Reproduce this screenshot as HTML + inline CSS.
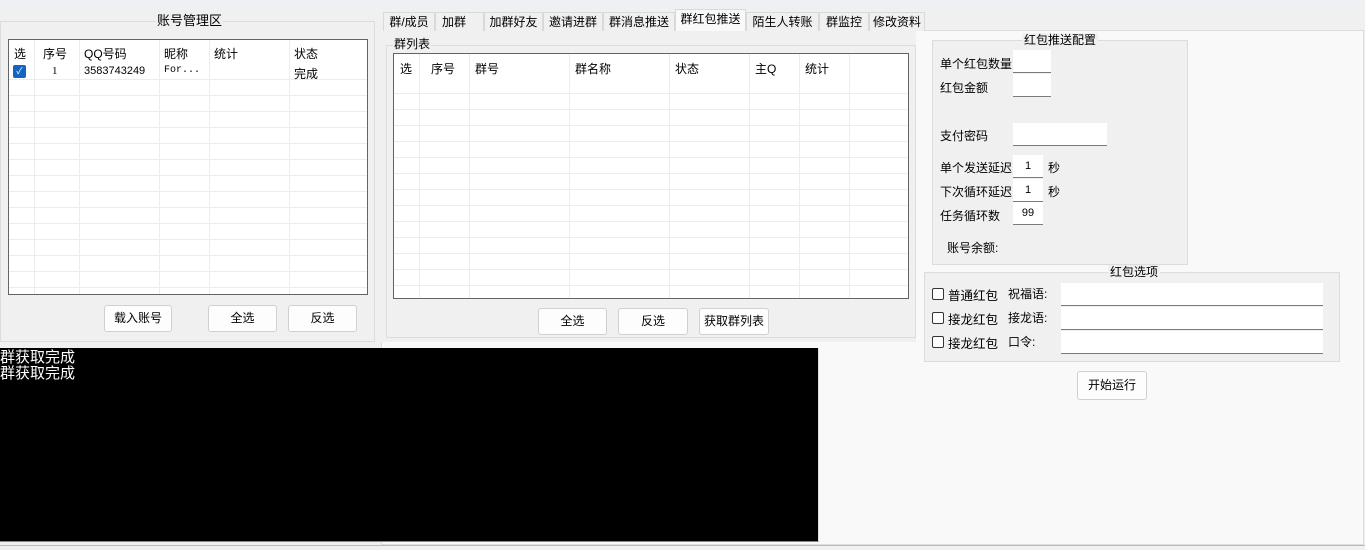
<!DOCTYPE html>
<html><head><meta charset="utf-8"><style>
*{margin:0;padding:0;box-sizing:border-box}
body{width:1365px;height:550px;background:#f0f0f0;position:relative;overflow:hidden;font-family:"Liberation Sans","Noto Sans CJK SC",sans-serif;font-size:12px;color:#000}
.a{position:absolute}
.grp{position:absolute;border:1px solid #dcdcdc}
.gt{position:absolute;background:#f0f0f0;padding:0 1px;font-size:12px;line-height:14px;white-space:nowrap}
.tbl{position:absolute;background:#fff;border:1px solid #646464;overflow:hidden}
.btn{position:absolute;background:#fdfdfd;border:1px solid #d0d0d0;border-radius:3px;text-align:center;font-size:12px}
.inp{position:absolute;background:#fff;border-bottom:1px solid #7a7a7a;font-size:11px;text-align:center;line-height:22px}
.tab{position:absolute;top:12px;height:19px;border:1px solid #d9d9d9;border-bottom:none;background:#f0f0f0;text-align:center;line-height:18px;font-size:12px}
.cb{position:absolute;width:12px;height:12px;border:1px solid #333;border-radius:2px;background:#fff}
</style></head><body>
<div class="a" style="left:0;top:0;width:1365px;height:10px;background:#eef0f3"></div>
<!-- tab page -->
<div class="a" style="left:381px;top:30px;width:983px;height:515px;background:#f9f9f9;border:1px solid #dcdcdc"></div>
<div class="a" style="left:381px;top:30px;width:535px;height:312px;background:#f0f0f0"></div>
<!-- left group -->
<div class="grp" style="left:0;top:21px;width:375px;height:321px"></div>
<div class="gt" style="left:156px;top:14px;font-size:13px">账号管理区</div>
<div class="tbl" style="left:8px;top:39px;width:360px;height:256px">
<svg class="a" style="left:0;top:0" width="360" height="256">
<g stroke="#ececec" stroke-width="1">
<line x1="0" y1="39.5" x2="360" y2="39.5"/><line x1="0" y1="55.5" x2="360" y2="55.5"/><line x1="0" y1="71.5" x2="360" y2="71.5"/><line x1="0" y1="87.5" x2="360" y2="87.5"/><line x1="0" y1="103.5" x2="360" y2="103.5"/><line x1="0" y1="119.5" x2="360" y2="119.5"/><line x1="0" y1="135.5" x2="360" y2="135.5"/><line x1="0" y1="151.5" x2="360" y2="151.5"/><line x1="0" y1="167.5" x2="360" y2="167.5"/><line x1="0" y1="183.5" x2="360" y2="183.5"/><line x1="0" y1="199.5" x2="360" y2="199.5"/><line x1="0" y1="215.5" x2="360" y2="215.5"/><line x1="0" y1="231.5" x2="360" y2="231.5"/><line x1="0" y1="247.5" x2="360" y2="247.5"/>
<line x1="25.5" y1="0" x2="25.5" y2="256"/><line x1="70.5" y1="0" x2="70.5" y2="256"/><line x1="150.5" y1="0" x2="150.5" y2="256"/><line x1="200.5" y1="0" x2="200.5" y2="256"/><line x1="280.5" y1="0" x2="280.5" y2="256"/>
</g></svg>
<div class="a" style="left:5px;top:5px">选</div><div class="a" style="left:34px;top:5px">序号</div><div class="a" style="left:75px;top:5px">QQ号码</div><div class="a" style="left:155px;top:5px">昵称</div><div class="a" style="left:205px;top:5px">统计</div><div class="a" style="left:285px;top:5px">状态</div>
<div class="a" style="left:4px;top:25px;width:13px;height:13px;background:#1565c0;border-radius:2px;color:#fff;font-size:9px;text-align:center;line-height:13px">✓</div>
<div class="a" style="left:43px;top:25px;font-family:'Liberation Serif',serif;font-size:11px">1</div>
<div class="a" style="left:75px;top:25px;font-size:11px">3583743249</div>
<div class="a" style="left:155px;top:25px;font-family:'Liberation Mono',monospace;font-size:10px">For...</div>
<div class="a" style="left:285px;top:25px">完成</div>
</div>
<div class="btn" style="left:104px;top:305px;width:68px;height:27px;line-height:25px">载入账号</div>
<div class="btn" style="left:208px;top:305px;width:69px;height:27px;line-height:25px">全选</div>
<div class="btn" style="left:288px;top:305px;width:69px;height:27px;line-height:25px">反选</div>
<!-- console -->
<div class="a" style="left:0;top:348px;width:819px;height:194px;background:#000;border-bottom:1px solid #888;border-right:1px solid #ddd;color:#fff;font-size:15px;line-height:16px;padding-top:2px">群获取完成<br>群获取完成</div>
<div class="tab" style="left:383px;width:52px">群/成员</div>
<div class="tab" style="left:435px;width:49px;text-align:left;padding-left:6px">加群</div>
<div class="tab" style="left:484px;width:59px">加群好友</div>
<div class="tab" style="left:543px;width:60px">邀请进群</div>
<div class="tab" style="left:603px;width:72px">群消息推送</div>
<div class="tab" style="left:675px;top:9px;height:22px;width:71px;background:#f9f9f9">群红包推送</div>
<div class="tab" style="left:746px;width:73px">陌生人转账</div>
<div class="tab" style="left:819px;width:50px">群监控</div>
<div class="tab" style="left:869px;width:56px">修改资料</div>
<!-- group list -->
<div class="grp" style="left:386px;top:45px;width:530px;height:293px;background:#f0f0f0"></div>
<div class="gt" style="left:393px;top:37px">群列表</div>
<div class="tbl" style="left:393px;top:53px;width:516px;height:246px">
<svg class="a" style="left:0;top:0" width="516" height="246">
<g stroke="#ececec" stroke-width="1">
<line x1="0" y1="39.5" x2="516" y2="39.5"/><line x1="0" y1="55.5" x2="516" y2="55.5"/><line x1="0" y1="71.5" x2="516" y2="71.5"/><line x1="0" y1="87.5" x2="516" y2="87.5"/><line x1="0" y1="103.5" x2="516" y2="103.5"/><line x1="0" y1="119.5" x2="516" y2="119.5"/><line x1="0" y1="135.5" x2="516" y2="135.5"/><line x1="0" y1="151.5" x2="516" y2="151.5"/><line x1="0" y1="167.5" x2="516" y2="167.5"/><line x1="0" y1="183.5" x2="516" y2="183.5"/><line x1="0" y1="199.5" x2="516" y2="199.5"/><line x1="0" y1="215.5" x2="516" y2="215.5"/><line x1="0" y1="231.5" x2="516" y2="231.5"/>
<line x1="25.5" y1="0" x2="25.5" y2="246"/><line x1="75.5" y1="0" x2="75.5" y2="246"/><line x1="175.5" y1="0" x2="175.5" y2="246"/><line x1="275.5" y1="0" x2="275.5" y2="246"/><line x1="355.5" y1="0" x2="355.5" y2="246"/><line x1="405.5" y1="0" x2="405.5" y2="246"/><line x1="455.5" y1="0" x2="455.5" y2="246"/>
</g></svg>
<div class="a" style="left:6px;top:6px">选</div><div class="a" style="left:37px;top:6px">序号</div><div class="a" style="left:81px;top:6px">群号</div><div class="a" style="left:181px;top:6px">群名称</div><div class="a" style="left:281px;top:6px">状态</div><div class="a" style="left:361px;top:6px">主Q</div><div class="a" style="left:411px;top:6px">统计</div>
</div>
<div class="btn" style="left:538px;top:308px;width:69px;height:27px;line-height:25px">全选</div>
<div class="btn" style="left:618px;top:308px;width:70px;height:27px;line-height:25px">反选</div>
<div class="btn" style="left:699px;top:308px;width:70px;height:27px;line-height:25px">获取群列表</div>
<!-- config -->
<div class="grp" style="left:932px;top:40px;width:256px;height:225px;background:#f0f0f0"></div>
<div class="gt" style="left:1022px;top:33px;padding:0 2px">红包推送配置</div>
<div class="a" style="left:940px;top:55px">单个红包数量</div>
<div class="inp" style="left:1013px;top:50px;width:38px;height:23px"></div>
<div class="a" style="left:940px;top:79px">红包金额</div>
<div class="inp" style="left:1013px;top:74px;width:38px;height:23px"></div>
<div class="a" style="left:940px;top:127px">支付密码</div>
<div class="inp" style="left:1013px;top:123px;width:94px;height:23px"></div>
<div class="a" style="left:940px;top:159px">单个发送延迟</div>
<div class="inp" style="left:1013px;top:155px;width:30px;height:23px">1</div>
<div class="a" style="left:1048px;top:159px">秒</div>
<div class="a" style="left:940px;top:183px">下次循环延迟</div>
<div class="inp" style="left:1013px;top:179px;width:30px;height:23px">1</div>
<div class="a" style="left:1048px;top:183px">秒</div>
<div class="a" style="left:940px;top:207px">任务循环数</div>
<div class="inp" style="left:1013px;top:202px;width:30px;height:23px">99</div>
<div class="a" style="left:947px;top:239px">账号余额:</div>
<!-- options -->
<div class="grp" style="left:924px;top:272px;width:416px;height:90px;background:#f0f0f0"></div>
<div class="gt" style="left:1108px;top:265px;padding:0 2px">红包选项</div>
<div class="cb" style="left:932px;top:288px"></div><div class="a" style="left:948px;top:285px;font-size:12.5px">普通红包</div><div class="a" style="left:1008px;top:285px">祝福语:</div>
<div class="inp" style="left:1061px;top:283px;width:262px;height:23px"></div>
<div class="cb" style="left:932px;top:312px"></div><div class="a" style="left:948px;top:309px;font-size:12.5px">接龙红包</div><div class="a" style="left:1008px;top:309px">接龙语:</div>
<div class="inp" style="left:1061px;top:307px;width:262px;height:23px"></div>
<div class="cb" style="left:932px;top:336px"></div><div class="a" style="left:948px;top:333px;font-size:12.5px">接龙红包</div><div class="a" style="left:1008px;top:333px">口令:</div>
<div class="inp" style="left:1061px;top:331px;width:262px;height:23px"></div>
<div class="btn" style="left:1077px;top:371px;width:70px;height:29px;line-height:27px">开始运行</div>
<div class="a" style="left:0;top:545px;width:1365px;height:5px;background:#f0f0f0;border-top:1px solid #bbb"></div>
</body></html>
